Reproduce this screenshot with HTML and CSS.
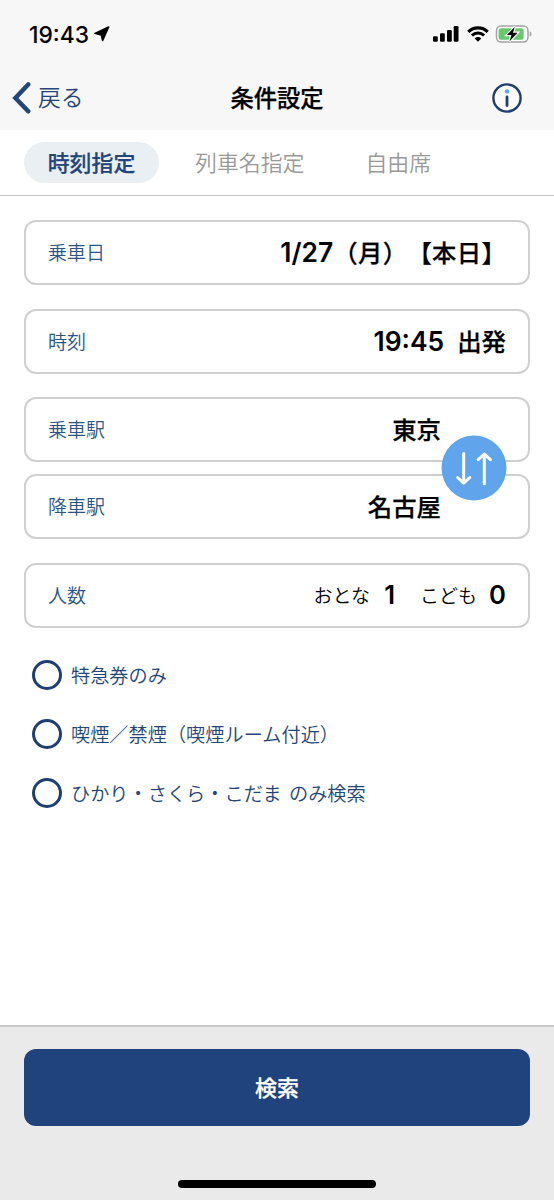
FILE: index.html
```html
<!DOCTYPE html>
<html lang="ja">
<head>
<meta charset="utf-8">
<title>条件設定</title>
<link rel="stylesheet" href="styles.css">
</head>
<body>
<div class="screen">
  <header class="top">
    <div class="status">
      <div class="clock"><span>19:43</span>
        <svg width="16" height="16" viewBox="0 0 16 16"><path d="M14.7 0.9 L8.6 14.6 L7.2 9 L0.9 7.4 Z" fill="#000" stroke="#000" stroke-width="1.4" stroke-linejoin="round"/></svg>
      </div>
      <div class="indicators">
        <svg width="26" height="16" viewBox="0 0 26 16"><rect x="0" y="10.2" width="4.8" height="5.6" rx="1.2"/><rect x="7" y="7.2" width="4.8" height="8.6" rx="1.2"/><rect x="14" y="4" width="4.8" height="11.8" rx="1.2"/><rect x="20.7" y="0" width="4.8" height="15.8" rx="1.2"/></svg>
        <svg class="wifi" width="22" height="16" viewBox="0 0 22 16" fill="none" stroke="#000"><path d="M1.3 5.8 A14 14 0 0 1 20.7 5.8" stroke-width="3.2"/><path d="M4.9 9.5 A8.8 8.8 0 0 1 17.1 9.5" stroke-width="3.1"/><path d="M11 15.8 L7.7 12.5 Q11 9.7 14.3 12.5 Z" fill="#000" stroke="none"/></svg>
        <svg width="38" height="18" viewBox="0 0 38 18"><rect x="1.5" y="1" width="31.5" height="16" rx="4.7" fill="#fff" stroke="#a3a3a3" stroke-width="1.5"/><path d="M34.7 6.3 Q36.6 7 36.6 9 Q36.6 11 34.7 11.7 Z" fill="#a3a3a3"/><rect x="3.6" y="3.2" width="25" height="11.6" rx="2.6" fill="#67c96b"/><path d="M19.8 1.7 L12 10 H16.4 L14.6 16.3 L22.6 7.7 H18 Z" fill="#000" stroke="#fff" stroke-width="2.4" paint-order="stroke"/></svg>
      </div>
    </div>
    <nav class="navbar">
      <div class="back">
        <svg width="20" height="32" viewBox="0 0 20 32"><path d="M16.2 2.5 L3.4 16 L16.2 29.3" fill="none" stroke="#24457a" stroke-width="4.5" stroke-linecap="round" stroke-linejoin="miter"/></svg>
        <span>戻る</span>
      </div>
      <h1 class="title">条件設定</h1>
      <svg class="info" width="30" height="30" viewBox="0 0 30 30"><circle cx="15" cy="15" r="13.6" fill="#fff" fill-opacity=".4" stroke="#203e72" stroke-width="2.4"/><circle cx="15" cy="8.4" r="2.2" fill="#60a5e6"/><path d="M15 14 V22.6" stroke="#203e72" stroke-width="2.8" stroke-linecap="round"/></svg>
    </nav>
  </header>
  <div class="tabs">
    <div class="tab active">時刻指定</div>
    <div class="tab">列車名指定</div>
    <div class="tab">自由席</div>
  </div>
  <main class="form">
    <div class="field"><span class="label">乗車日</span><span class="value date"><span class="num">1/27</span><span class="day">（月）【本日】</span></span></div>
    <div class="field"><span class="label">時刻</span><span class="value time"><span class="num">19:45</span><span>出発</span></span></div>
    <div class="stations">
      <div class="field station"><span class="label">乗車駅</span><span class="value">東京</span></div>
      <div class="field station"><span class="label">降車駅</span><span class="value">名古屋</span></div>
      <svg class="swap" width="66" height="66" viewBox="0 0 66 66"><circle cx="33" cy="33" r="32.5" fill="#60a5ec"/><path d="M22.7 18.5 V48 M16.6 42.5 L22.7 48.2 L28.8 42.5 M43.3 48.7 V19 M37.2 24.7 L43.3 19 L49.4 24.7" fill="none" stroke="#fff" stroke-width="3" stroke-linecap="round" stroke-linejoin="round"/></svg>
    </div>
    <div class="field"><span class="label">人数</span><span class="people"><span>おとな</span><b class="adults">1</b><span class="child">こども</span><b class="children">0</b></span></div>
    <div class="options">
      <div class="option"><i class="radio"></i><span>特急券のみ</span></div>
      <div class="option"><i class="radio"></i><span>喫煙／禁煙（喫煙ルーム付近）</span></div>
      <div class="option"><i class="radio"></i><span>ひかり・さくら・こだま のみ検索</span></div>
    </div>
  </main>
  <footer class="bottom">
    <div class="search">検索</div>
    <div class="home"></div>
  </footer>
</div>
</body>
</html>
```

FILE: styles.css
```css
* { box-sizing: border-box; }
body {
  margin: 0;
  background: #fff;
  color: #000;
  font-family: "Noto Sans CJK JP", sans-serif;
  text-spacing-trim: space-all;
}
svg { display: block; flex: none; }
.screen { width: 554px; height: 1200px; display: flex; flex-direction: column; overflow: hidden; white-space: nowrap; }
.top { height: 130px; background: #f7f7f7; }
.status { height: 66px; padding: 2px 21px 0 29px; display: flex; align-items: center; justify-content: space-between; }
.clock { display: flex; align-items: center; gap: 4px; font: 500 22.8px/26px Inter, sans-serif; }
.clock span { width: 61px; padding-top: 1px; }
.indicators { display: flex; align-items: center; gap: 7px; }
.wifi { margin-right: -1px; margin-left: 1px; }
.navbar { height: 64px; padding: 0 32px 0 12px; display: grid; grid-template-columns: 1fr auto 1fr; align-items: center; }
.back { display: flex; align-items: center; gap: 6px; color: #24457a; font-size: 22.8px; font-weight: 350; line-height: 32px; }
.back span { padding-bottom: 2px; }
.title { margin: 0 0 0 20px; padding-bottom: 2px; font-size: 23.3px; font-weight: 500; line-height: 32px; -webkit-text-stroke: 0.25px; }
.info { justify-self: end; }
.tabs { height: 66px; padding: 12px 24px; display: flex; border-bottom: 1.5px solid #c4c4c4; }
.tab { height: 41px; font-size: 21.9px; font-weight: 350; line-height: 39px; color: #999; }
.tab.active { width: 135px; margin-right: 36px; text-align: center; border-radius: 21px; background: #eaeff3; color: #24457a; font-weight: 500; -webkit-text-stroke: 0.25px; }
.tab + .tab + .tab { margin-left: 61px; }
.form { padding: 24px 24px 0; display: flex; flex-direction: column; gap: 23.6px; }
.field { height: 65px; padding: 0 22px 2px; display: flex; align-items: center; justify-content: space-between; border: 2px solid #d0d0d0; border-radius: 12px; background: #fff; }
.label { font-size: 19px; font-weight: 350; color: #2c5588; }
.value { font-size: 24.4px; font-weight: 500; -webkit-text-stroke: 0.25px; }
.num { font-family: Inter, sans-serif; font-size: 26.4px; font-weight: 600; -webkit-text-stroke: 0; }
.date, .time { display: flex; align-items: center; }
.date .num, .time .num { padding-top: 1px; }
.day { letter-spacing: 0.35px; margin-right: -0.35px; }
.time { gap: 13px; }
.stations { position: relative; display: flex; flex-direction: column; gap: 12px; }
.station { padding-right: 87px; }
.swap { position: absolute; right: 23px; top: 38px; }
.people { display: flex; align-items: center; font-size: 19px; font-weight: 350; }
.people b { padding-top: 2px; font: 600 25.6px/30px Inter, sans-serif; text-align: right; }
.adults { width: 25px; }
.child { margin-left: 25px; }
.children { width: 29px; }
.options { margin-top: 9px; display: flex; flex-direction: column; gap: 29px; }
.option { height: 30px; padding-left: 8px; display: flex; align-items: center; gap: 9px; font-size: 19.2px; font-weight: 350; line-height: 30px; color: #24457a; word-spacing: 3px; }
.option span { padding-bottom: 1px; }
.radio { width: 30px; height: 30px; border: 3px solid #203e72; border-radius: 50%; }
.bottom { margin-top: auto; height: 175px; padding: 22px 24px 0; display: flex; flex-direction: column; align-items: center; background: #eaeaea; border-top: 2px solid #c8c8c8; }
.search { align-self: stretch; height: 77px; border-radius: 12px; background: #20427d; color: #fff; font-size: 22px; font-weight: 500; line-height: 75px; text-align: center; -webkit-text-stroke: 0.25px; }
.home { width: 198px; height: 8px; margin-top: 54px; border-radius: 4px; background: #000; }
```
